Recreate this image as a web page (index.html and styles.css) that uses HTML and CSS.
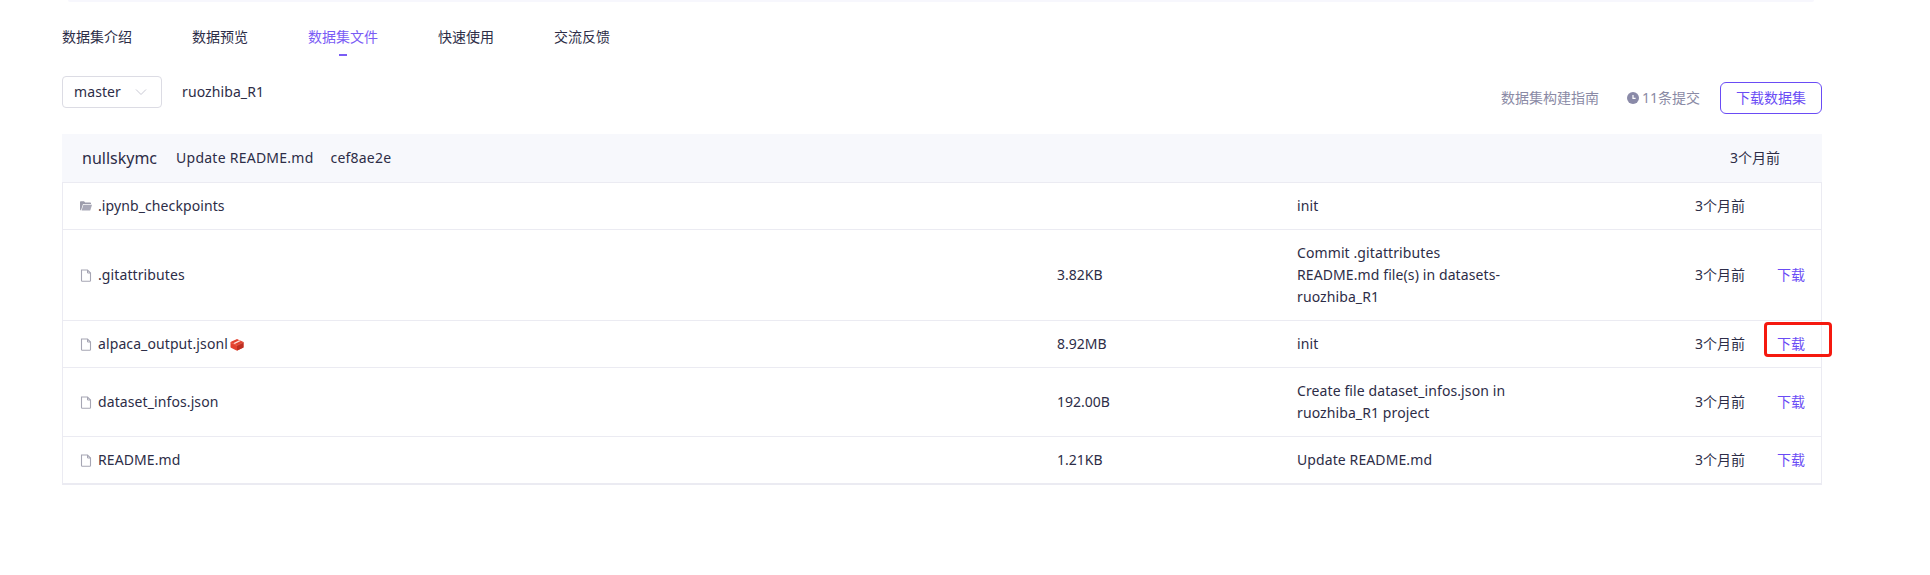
FILE: index.html
```html
<!DOCTYPE html>
<html lang="zh">
<head>
<meta charset="utf-8">
<title>数据集文件</title>
<link rel="stylesheet" href="styles.css">
</head>
<body>
<div class="top-strip"></div>
<main class="page">
  <nav class="tabs">
    <a class="tab">数据集介绍</a>
    <a class="tab">数据预览</a>
    <a class="tab active">数据集文件</a>
    <a class="tab">快速使用</a>
    <a class="tab">交流反馈</a>
  </nav>
  <div class="toolbar">
    <div class="select">
      <span class="latin">master</span>
      <svg class="chev" width="12" height="8" viewBox="0 0 12 8"><path d="M1 1.500l5 5 5-5" fill="none" stroke="#c9c9d4" stroke-width="1"/></svg>
    </div>
    <span class="repo latin">ruozhiba_R1</span>
    <div class="tools">
      <span class="guide">数据集构建指南</span>
      <span class="commits">
        <svg width="12" height="12" viewBox="0 0 12 12"><circle cx="6" cy="6" r="6" fill="#8a8aa8"/><path d="M6 3v3.400h2.600" fill="none" stroke="#fff" stroke-width="1.200"/></svg>
        11条提交
      </span>
      <button class="download-all">下载数据集</button>
    </div>
  </div>
  <section class="files">
    <div class="head">
      <span class="author">nullskymc</span>
      <span class="msg latin">Update README.md</span>
      <span class="hash latin">cef8ae2e</span>
      <span class="head-date">3个月前</span>
    </div>
    <div class="row">
      <div class="name">
        <svg class="ico" width="12" height="12" viewBox="0 0 12 12"><path d="M0 2.200C0 1.600.4 1.200 1 1.200h3l1.200 1.200H10c.6 0 1 .4 1 1V4H3L.9 10.400C.4 10.200 0 9.800 0 9.200z" fill="#9c9cab"/><path d="M3.400 4.800H12l-1.800 5.800H1.600z" fill="#a9a9b8"/></svg>
        <span class="latin">.ipynb_checkpoints</span>
      </div>
      <div></div>
      <div class="commit latin">init</div>
      <div>3个月前</div>
      <div></div>
    </div>
    <div class="row">
      <div class="name">
        <svg class="ico" width="12" height="13" viewBox="0 0 12 13"><path d="M1.500 1h6l3 3v7.500a.8.8 0 0 1-.8.8H2.300a.8.8 0 0 1-.8-.8z" fill="none" stroke="#a6a6b4" stroke-width="1.100"/><path d="M7.500 1v3h3" fill="none" stroke="#a6a6b4"/></svg>
        <span class="latin">.gitattributes</span>
      </div>
      <div>3.82KB</div>
      <div class="commit latin">Commit .gitattributes README.md file(s) in datasets-ruozhiba_R1</div>
      <div>3个月前</div>
      <a class="dl">下载</a>
    </div>
    <div class="row">
      <div class="name">
        <svg class="ico" width="12" height="13" viewBox="0 0 12 13"><path d="M1.500 1h6l3 3v7.500a.8.8 0 0 1-.8.8H2.300a.8.8 0 0 1-.8-.8z" fill="none" stroke="#a6a6b4" stroke-width="1.100"/><path d="M7.500 1v3h3" fill="none" stroke="#a6a6b4"/></svg>
        <span class="latin">alpaca_output.jsonl</span>
        <svg class="lfs" width="14" height="13" viewBox="0 0 14 13"><path d="M6.500 1.200Q7 1 7.500 1.200l5.500 2.600q.5.300.5.900v4.200q0 .6-.5.900L7.500 12.400q-.5.200-1 0L1 9.800q-.5-.3-.5-.9V4.700q0-.6.500-.9z" fill="#e2412f"/><path d="M7 7v5.500l6.500-3V4z" fill="#bd2f22"/><path d="M3.200 5.300l6-3 1.500.7-6 3z" fill="#fde3dc"/><path d="M.5 4.500L7 7.400l6.500-3.100" fill="none" stroke="#f3745f" stroke-width=".6"/></svg>
      </div>
      <div>8.92MB</div>
      <div class="commit latin">init</div>
      <div>3个月前</div>
      <a class="dl marked">下载</a>
    </div>
    <div class="row">
      <div class="name">
        <svg class="ico" width="12" height="13" viewBox="0 0 12 13"><path d="M1.500 1h6l3 3v7.500a.8.8 0 0 1-.8.8H2.300a.8.8 0 0 1-.8-.8z" fill="none" stroke="#a6a6b4" stroke-width="1.100"/><path d="M7.500 1v3h3" fill="none" stroke="#a6a6b4"/></svg>
        <span class="latin">dataset_infos.json</span>
      </div>
      <div>192.00B</div>
      <div class="commit latin">Create file dataset_infos.json in ruozhiba_R1 project</div>
      <div>3个月前</div>
      <a class="dl">下载</a>
    </div>
    <div class="row">
      <div class="name">
        <svg class="ico" width="12" height="13" viewBox="0 0 12 13"><path d="M1.500 1h6l3 3v7.500a.8.8 0 0 1-.8.8H2.300a.8.8 0 0 1-.8-.8z" fill="none" stroke="#a6a6b4" stroke-width="1.100"/><path d="M7.500 1v3h3" fill="none" stroke="#a6a6b4"/></svg>
        <span class="latin">README.md</span>
      </div>
      <div>1.21KB</div>
      <div class="commit latin">Update README.md</div>
      <div>3个月前</div>
      <a class="dl">下载</a>
    </div>
  </section>
</main>
</body>
</html>
```
FILE: styles.css
```css
* { box-sizing: border-box; }
html, body { margin: 0; padding: 0; background: #fff; }
body {
  font-family: "Noto Sans", "Noto Sans CJK SC", sans-serif;
  font-size: 14px;
  line-height: 22px;
  color: #2d2d47;
  height: 575px;
  overflow: hidden;
}
.latin { letter-spacing: 0.1px; }
.top-strip {
  height: 2px;
  margin: 0 116px 0 68px;
  background: #f7f7fd;
  border-radius: 0 0 4px 4px;
}
.page { width: 1760px; margin-left: 62px; }
.tabs { display: flex; gap: 60px; padding-top: 24px; height: 74px; }
.tab { position: relative; height: 22px; color: #2d2d47; }
.tab.active { color: #7a5cf5; }
.tab.active::after {
  content: "";
  position: absolute;
  left: 50%;
  top: 28px;
  width: 8px;
  height: 2px;
  margin-left: -4px;
  background: #7a5cf5;
}
.toolbar { display: flex; align-items: center; height: 32px; }
.select {
  display: flex;
  align-items: center;
  justify-content: space-between;
  width: 100px;
  height: 32px;
  padding: 0 14px 0 11px;
  border: 1px solid #dcdce4;
  border-radius: 4px;
}
.repo { margin-left: 20px; margin-bottom: 1px; }
.tools { display: flex; align-items: center; margin-left: auto; padding-top: 12px; }
.guide { color: #8a8aa5; }
.commits { display: flex; align-items: center; gap: 3px; margin-left: 28px; color: #8a8aa5; }
.download-all {
  width: 102px;
  height: 32px;
  margin-left: 20px;
  padding: 0;
  font: inherit;
  color: #6a4cf5;
  background: #fff;
  border: 1px solid #6a4cf5;
  border-radius: 6px;
}
.files { margin-top: 26px; border: 1px solid #ebebf2; border-top: 0; border-bottom-width: 2px; }
.head {
  display: flex;
  align-items: center;
  height: 49px;
  margin: 0 -1px;
  padding: 0 0 1px 20px;
  background: #f7f8fc;
  border-bottom: 1px solid #ebebf2;
}
.author { font-size: 16px; }
.msg { margin-left: 19px; letter-spacing: 0.25px; }
.hash { margin-left: 17px; letter-spacing: 0.2px; }
.head-date { margin-left: auto; margin-right: 42px; }
.row {
  display: grid;
  grid-template-columns: 994px 240px 398px 82px 1fr;
  align-items: center;
  padding: 12px 0;
  border-bottom: 1px solid #ebebf2;
}
.row:last-child { border-bottom: 0; }
.name { display: flex; align-items: center; padding-left: 17px; }
.ico { margin-right: 6px; flex: none; }
.lfs { margin-left: 2px; }
.commit { width: 215px; }
.dl { position: relative; color: #6a4cf5; }
.dl.marked::after {
  content: "";
  position: absolute;
  box-sizing: border-box;
  left: -13px;
  top: -11px;
  width: 68px;
  height: 35px;
  border: 3px solid #f5190f;
  border-radius: 4px;
}
```
